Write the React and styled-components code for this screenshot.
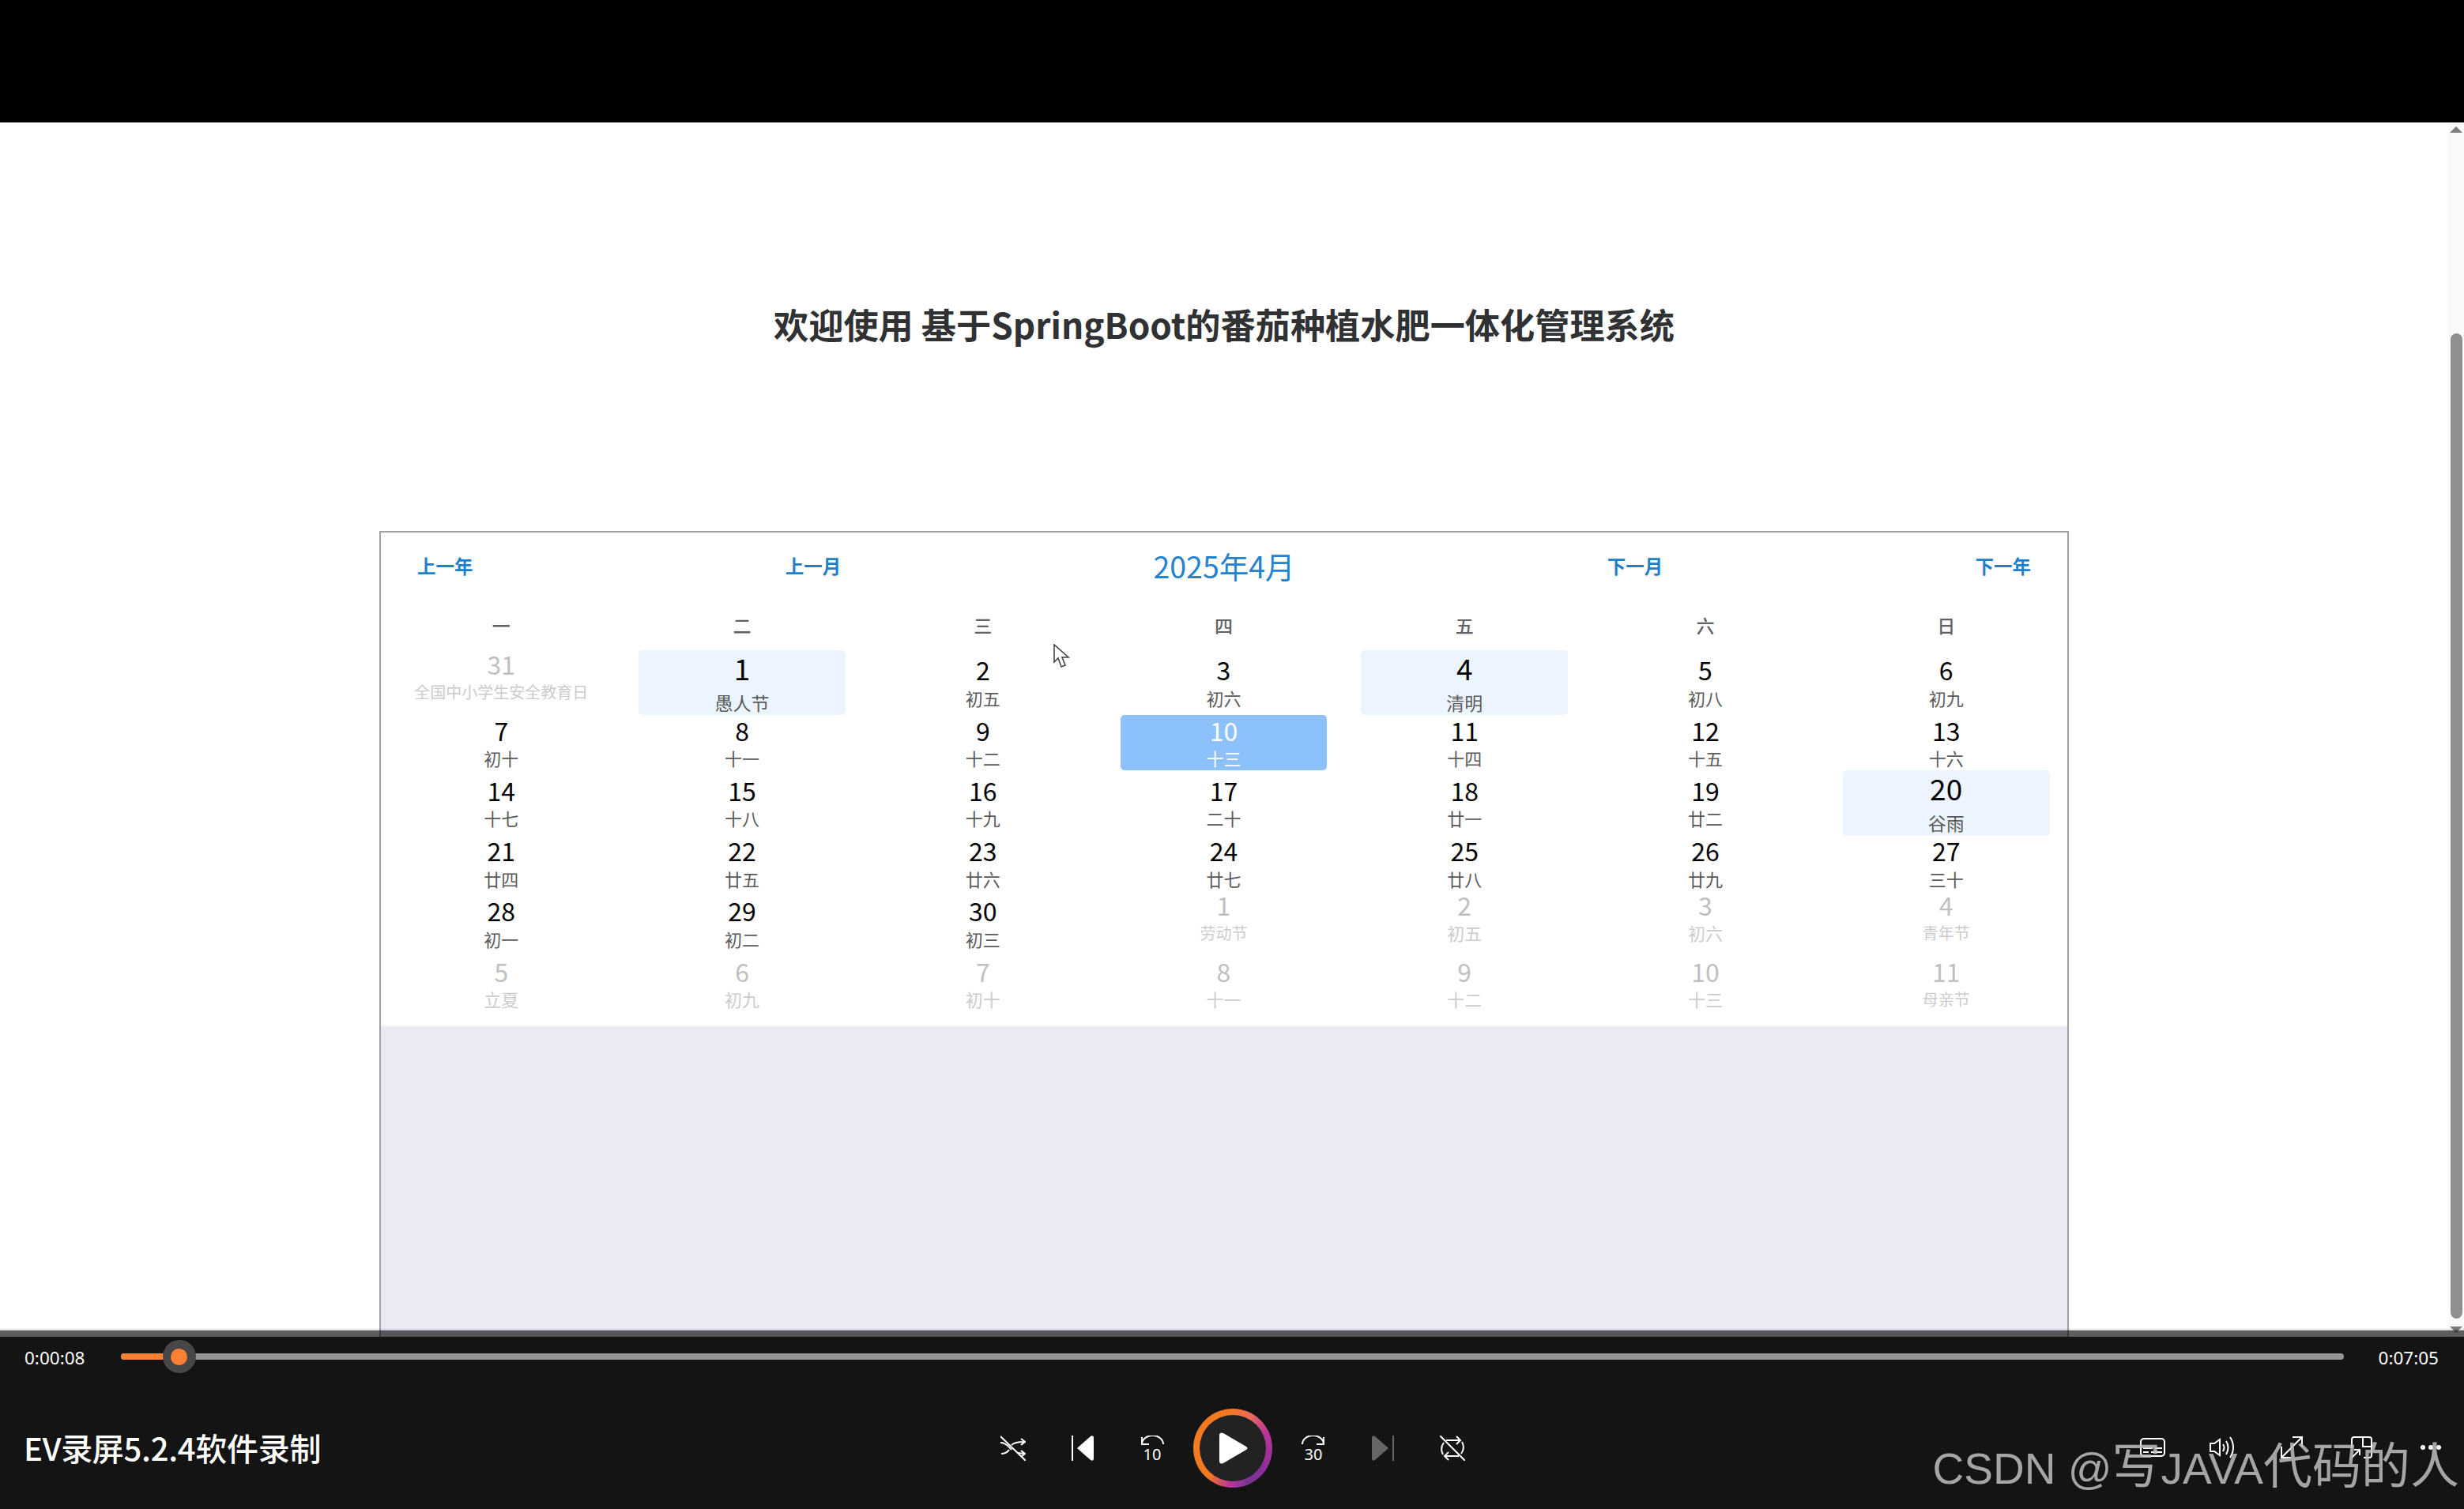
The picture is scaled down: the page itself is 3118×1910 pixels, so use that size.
import React from "react";
import styled, { createGlobalStyle } from "styled-components";

const Global = createGlobalStyle`
  html, body { margin: 0; padding: 0; background: #000; }
  * { box-sizing: border-box; }
  body { font-family: "Noto Sans CJK SC", "Noto Sans", sans-serif; }
`;

const Screen = styled.div`
  width: 3118px; height: 1910px; display: flex; flex-direction: column; overflow: hidden; position: relative;
`;
const TopBar = styled.div` height: 155px; flex: none; background: #000; `;
const Main = styled.div` flex: 1; min-height: 0; display: flex; background: #fff; overflow: hidden; `;
const Page = styled.div` flex: 1; min-width: 0; display: flex; flex-direction: column; align-items: center; `;
const Heading = styled.h2`
  margin: 0; height: 517px; flex: none; padding-top: 224px; font-size: 44.2px; line-height: 62px; font-weight: 700; color: #303133;
  white-space: nowrap;
`;
const Scrollbar = styled.div`
  width: 20px; flex: none; background: #fafafa; display: flex; flex-direction: column; align-items: center; padding-top: 5px; position: relative;
`;
const ArrowUp = styled.div`
  width: 0; height: 0; border-left: 8px solid transparent; border-right: 8px solid transparent; border-bottom: 8px solid #7d7d7d;
`;
const ArrowDown = styled.div`
  width: 0; height: 0; border-left: 8px solid transparent; border-right: 8px solid transparent; border-top: 8px solid #7d7d7d; margin-top: 10px;
`;
const Thumb = styled.div`
  width: 15px; height: 1247px; margin-top: 254px; border-radius: 8px; background: #8f8f8f;
`;

const Card = styled.section`
  width: 2138px; flex: 1; min-height: 0; border: 2px solid #a0a0a0; border-bottom: 0; background: #e9eaf4; display: flex; flex-direction: column;
`;
const Calendar = styled.div`
  height: 626px; flex: none; background: #fff; border-bottom: 2px solid #f0f0f6; padding-right: 1px;
`;
const CalHeader = styled.div`
  height: 86px; display: flex; align-items: center; justify-content: space-between; padding: 0 45px 2px 46px;
`;
const NavButton = styled.span`
  font-size: 23.5px; font-weight: 700; color: #1f7fc9; white-space: nowrap;
`;
const MonthTitle = styled.span`
  font-size: 37.5px; color: #2483cf; white-space: nowrap; margin-top: -2px;
`;
const WeekRow = styled.div`
  height: 62.5px; display: grid; grid-template-columns: repeat(7, 1fr); align-items: center; justify-items: center;
  font-size: 23px; font-weight: 500; color: #606266;
`;
const DayRow = styled.div`
  height: ${p => (p.$tall ? 82.5 : 70)}px; display: grid; grid-template-columns: repeat(7, 1fr); align-items: center;
`;
const Cell = styled.div`
  margin: 0 21.5px; display: flex; flex-direction: column; align-items: center; border-radius: 5px; white-space: nowrap;
  height: ${p => (p.$kind === "holiday" ? "100%" : "70px")};
  padding-top: ${p => (p.$kind === "holiday" || p.$top ? 0 : 1.5)}px;
  align-self: ${p => (p.$top ? "start" : "center")};
  background: ${p => (p.$kind === "holiday" ? "#ecf5ff" : p.$kind === "selected" ? "#8cc1fb" : "transparent")};
`;
const DayNumber = styled.div`
  font-size: ${p => (p.$kind === "holiday" ? 37 : 32)}px;
  line-height: ${p => (p.$kind === "holiday" ? 44 : 35.5)}px;
  color: ${p => (p.$kind === "other" ? "#c0c0c0" : p.$kind === "selected" ? "#ffffff" : "#000000")};
`;
const Lunar = styled.div`
  font-size: ${p => p.$size || 22}px;
  line-height: 29px;
  margin-top: ${p => (p.$kind === "holiday" ? 8 : 3)}px;
  color: ${p => (p.$kind === "other" ? "#cccccc" : p.$kind === "selected" ? "#ffffff" : "#5a5a5a")};
`;
const Pointer = styled.svg`
  position: absolute; left: 1333px; top: 815px; width: 21px; height: 31px;
`;

const Player = styled.footer`
  height: 228px; flex: none; margin-top: -10px; position: relative; display: flex; flex-direction: column; color: #fff;
`;
const Fade = styled.div` height: 2px; flex: none; background: rgba(0,0,0,.1); `;
const Strip = styled.div` height: 8px; flex: none; background: rgba(0,0,0,.63); `;
const PlayerBody = styled.div`
  flex: 1; background: #141414; display: flex; flex-direction: column;
`;
const ProgressRow = styled.div`
  height: 50px; flex: none; display: flex; align-items: center; padding: 0 32px 0 31px; 
`;
const Time = styled.span`
  font-family: "Noto Sans", sans-serif; font-size: 22.5px; flex: none; width: 122px; line-height: 50px; padding-top: 3px; color: #fff;
  &:last-child { width: auto; margin-left: 44px; }
`;
const Track = styled.div`
  flex: 1; height: 8px; border-radius: 4px; background: #959595; position: relative;
`;
const Played = styled.div`
  height: 100%; border-radius: 4px 0 0 4px; background: #ff8033;
`;
const Knob = styled.div`
  position: absolute; top: 50%; transform: translate(-50%, -50%); width: 42px; height: 42px; border-radius: 50%; background: #474747;
  display: flex; align-items: center; justify-content: center;
  &::after { content: ""; width: 21px; height: 21px; border-radius: 50%; background: #ff8033; }
`;
const ControlRow = styled.div`
  flex: 1; position: relative; display: grid; grid-template-columns: 1fr auto 1fr; align-items: center; padding: 12px 29px 0 30px;
`;
const Title = styled.div`
  font-size: 40px; font-weight: 500; color: #fff; white-space: nowrap; letter-spacing: -0.3px;
`;
const Transport = styled.div` display: flex; align-items: center; margin-top: 2px; `;
const IconSlot = styled.div`
  width: ${p => p.$w}px; display: flex; justify-content: ${p => (p.$end ? "flex-end" : "center")}; align-items: center;
  color: ${p => (p.$dim ? "#666" : "#fff")};
`;
const PlayButton = styled.div`
  width: 100px; height: 100px; border-radius: 50%; padding: 8px; margin: 0 8px;
  background: conic-gradient(from 225deg, #f27a22 0deg, #f27a22 130deg, #e9685e 165deg, #b8359a 200deg, #8a2f97 260deg, #7a3394 290deg, #b8359a 320deg, #f27a22 355deg);
`;
const PlayInner = styled.div`
  width: 100%; height: 100%; border-radius: 50%; background: #222; display: flex; align-items: center; justify-content: center; padding-left: 3px;
`;
const Extras = styled.div`
  display: flex; align-items: center; justify-content: flex-end;
`;
const Watermark = styled.div`
  position: absolute; right: 6px; bottom: 16px; font-family: "Liberation Sans", "Noto Sans CJK SC", sans-serif; font-size: 62px; line-height: 70px;
  color: rgba(190,190,190,.86); white-space: nowrap; pointer-events: none;
`;
const WatermarkLatin = styled.span` font-size: 55px; `;
const SkipSvg = styled.svg` margin-bottom: -8px; `;
const IconText = styled.text`
  font-family: "Noto Sans", sans-serif; font-size: 20px; fill: currentColor; text-anchor: middle;
`;

const S = { fill: "none", stroke: "currentColor", strokeWidth: 2 };

const ShuffleIcon = () => (
  <svg width="32" height="32" viewBox="0 0 32 32" {...S}>
    <path d="M0 1 L32 32" />
    <path d="M0 9 C8 9 11 15 14 18 M1 23 C6 23 9 21 11 18" />
    <path d="M14 12 C17 9 21 8 30 8 M26 4 L31 8 L26 12" />
    <path d="M22 22 L30 23 M26 19 L31 23 L26 27" />
  </svg>
);
const PrevIcon = () => (
  <svg width="28" height="32" viewBox="0 0 28 32">
    <rect x="0" y="0" width="2" height="32" fill="currentColor" />
    <path d="M7 16 L24 1 Q28 -1 28 3 L28 29 Q28 33 24 31 Z" fill="currentColor" />
  </svg>
);
const NextIcon = () => (
  <svg width="28" height="32" viewBox="0 0 28 32">
    <rect x="26" y="0" width="2" height="32" fill="currentColor" />
    <path d="M21 16 L4 1 Q0 -1 0 3 L0 29 Q0 33 4 31 Z" fill="currentColor" />
  </svg>
);
const BackIcon = () => (
  <SkipSvg width="30" height="40" viewBox="0 0 30 40">
    <path d="M2 11 A13.5 11 0 0 1 29 11" {...S} />
    <path d="M2 2 L2 11 L11 11" {...S} />
    <IconText x="15" y="31">10</IconText>
  </SkipSvg>
);
const ForwardIcon = () => (
  <SkipSvg width="30" height="40" viewBox="0 0 30 40">
    <path d="M1 11 A13.5 11 0 0 1 28 11" {...S} />
    <path d="M28 2 L28 11 L19 11" {...S} />
    <IconText x="15" y="31">30</IconText>
  </SkipSvg>
);
const RepeatIcon = () => (
  <svg width="32" height="32" viewBox="0 0 32 32" {...S}>
    <path d="M0 0 L32 32" />
    <path d="M4 24 A14 14 0 0 1 5 9 M8 6 L26 6 M21 1 L26 6 L21 11" />
    <path d="M28 8 A14 14 0 0 1 27 23 M24 26 L6 26 M11 21 L6 26 L11 31" />
  </svg>
);
const PlayIcon = () => (
  <svg width="36" height="40" viewBox="0 0 36 40">
    <path d="M0 4 Q0 -1 5 1 L34 18 Q37 20 34 22 L5 39 Q0 41 0 36 Z" fill="#fff" />
  </svg>
);
const CaptionIcon = () => (
  <svg width="32" height="24" viewBox="0 0 32 24" {...S}>
    <rect x="1" y="1" width="30" height="22" rx="4" />
    <path d="M4 13 H16 M19 13 H28 M4 18 H11 M14 18 H28" />
  </svg>
);
const VolumeIcon = () => (
  <svg width="32" height="28" viewBox="0 0 32 28" {...S}>
    <path d="M1 9 H6 L13 4 V24 L6 19 H1 Z" />
    <path d="M17 10 Q20 14 17 19 M21 6 Q26 14 21 23 M26 1 Q34 14 26 27" />
  </svg>
);
const ExpandIcon = () => (
  <svg width="28" height="28" viewBox="0 0 28 28" {...S}>
    <path d="M1 27 L27 1 M15 1 H27 V13 M1 13 V27 H13" />
  </svg>
);
const MiniIcon = () => (
  <svg width="27" height="28" viewBox="0 0 27 28" {...S}>
    <path d="M1 15 V4 Q1 1 4 1 H23 Q26 1 26 4 V24 Q26 27 23 27 H16" />
    <path d="M15 1 V13 H26" />
    <path d="M1 27 L11 17 M4 17 H11 V24" />
  </svg>
);
const MoreIcon = () => (
  <svg width="26" height="6" viewBox="0 0 26 6" fill="currentColor">
    <circle cx="3" cy="3" r="3" /><circle cx="13" cy="3" r="3" /><circle cx="23" cy="3" r="3" />
  </svg>
);

const weekdays = ["一", "二", "三", "四", "五", "六", "日"];
const o = (n, l, size) => ({ n, l, kind: "other", size });
const rows = [
  { tall: true, days: [{ ...o(31, "全国中小学生安全教育日", 20), top: true }, { n: 1, l: "愚人节", kind: "holiday", size: 23 }, { n: 2, l: "初五" }, { n: 3, l: "初六" }, { n: 4, l: "清明", kind: "holiday", size: 23 }, { n: 5, l: "初八" }, { n: 6, l: "初九" }] },
  { days: [{ n: 7, l: "初十" }, { n: 8, l: "十一" }, { n: 9, l: "十二" }, { n: 10, l: "十三", kind: "selected" }, { n: 11, l: "十四" }, { n: 12, l: "十五" }, { n: 13, l: "十六" }] },
  { tall: true, days: [{ n: 14, l: "十七" }, { n: 15, l: "十八" }, { n: 16, l: "十九" }, { n: 17, l: "二十" }, { n: 18, l: "廿一" }, { n: 19, l: "廿二" }, { n: 20, l: "谷雨", kind: "holiday", size: 23 }] },
  { days: [{ n: 21, l: "廿四" }, { n: 22, l: "廿五" }, { n: 23, l: "廿六" }, { n: 24, l: "廿七" }, { n: 25, l: "廿八" }, { n: 26, l: "廿九" }, { n: 27, l: "三十" }] },
  { tall: true, days: [{ n: 28, l: "初一" }, { n: 29, l: "初二" }, { n: 30, l: "初三" }, { ...o(1, "劳动节", 20), top: true }, { ...o(2, "初五"), top: true }, { ...o(3, "初六"), top: true }, { ...o(4, "青年节", 20), top: true }] },
  { days: [o(5, "立夏"), o(6, "初九"), o(7, "初十"), o(8, "十一"), o(9, "十二"), o(10, "十三"), o(11, "母亲节", 20)] },
];

const progress = 74 / 2814;

export default function App() {
  return (
    <Screen>
      <Global />
      <TopBar />
      <Main>
        <Page>
          <Heading>欢迎使用 基于SpringBoot的番茄种植水肥一体化管理系统</Heading>
          <Card>
            <Calendar>
              <CalHeader>
                <NavButton>上一年</NavButton>
                <NavButton>上一月</NavButton>
                <MonthTitle>2025年4月</MonthTitle>
                <NavButton>下一月</NavButton>
                <NavButton>下一年</NavButton>
              </CalHeader>
              <WeekRow>{weekdays.map(d => <span key={d}>{d}</span>)}</WeekRow>
              {rows.map((row, i) => (
                <DayRow key={i} $tall={row.tall}>
                  {row.days.map((d, j) => (
                    <Cell key={j} $kind={d.kind} $top={d.top}>
                      <DayNumber $kind={d.kind}>{d.n}</DayNumber>
                      <Lunar $kind={d.kind} $size={d.size}>{d.l}</Lunar>
                    </Cell>
                  ))}
                </DayRow>
              ))}
            </Calendar>
          </Card>
        </Page>
        <Scrollbar>
          <ArrowUp />
          <Thumb />
          <ArrowDown />
        </Scrollbar>
      </Main>
      <Pointer viewBox="0 0 21 31">
        <path d="M1 1 L1 23 L6 18 L10 29 L15 27 L11 17 L19 17 Z" fill="#fff" stroke="#444" strokeWidth="1.6" />
      </Pointer>
      <Player>
        <Fade />
        <Strip />
        <PlayerBody>
          <ProgressRow>
            <Time>0:00:08</Time>
            <Track>
              <Played style={{ width: `${progress * 100}%` }} />
              <Knob style={{ left: `${progress * 100}%` }} />
            </Track>
            <Time>0:07:05</Time>
          </ProgressRow>
          <ControlRow>
            <Title>EV录屏5.2.4软件录制</Title>
            <Transport>
              <IconSlot $w={88}><ShuffleIcon /></IconSlot>
              <IconSlot $w={88}><PrevIcon /></IconSlot>
              <IconSlot $w={88}><BackIcon /></IconSlot>
              <PlayButton><PlayInner><PlayIcon /></PlayInner></PlayButton>
              <IconSlot $w={88}><ForwardIcon /></IconSlot>
              <IconSlot $dim $w={88}><NextIcon /></IconSlot>
              <IconSlot $w={88}><RepeatIcon /></IconSlot>
            </Transport>
            <Extras>
              <IconSlot $w={88}><CaptionIcon /></IconSlot>
              <IconSlot $w={88}><VolumeIcon /></IconSlot>
              <IconSlot $w={88}><ExpandIcon /></IconSlot>
              <IconSlot $w={88}><MiniIcon /></IconSlot>
              <IconSlot $end $w={57}><MoreIcon /></IconSlot>
            </Extras>
            <Watermark><WatermarkLatin>CSDN @</WatermarkLatin>写<WatermarkLatin>JAVA</WatermarkLatin>代码的人</Watermark>
          </ControlRow>
        </PlayerBody>
      </Player>
    </Screen>
  );
}
